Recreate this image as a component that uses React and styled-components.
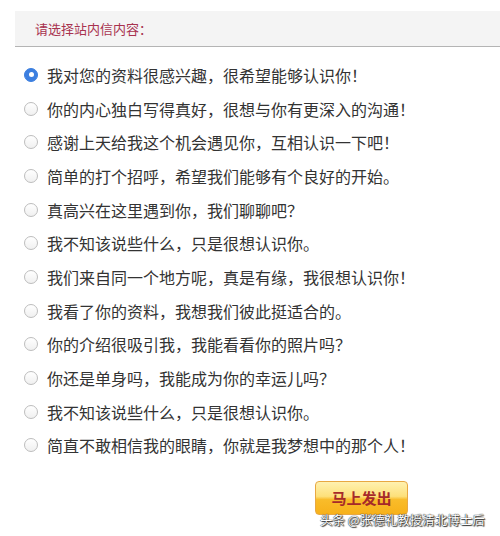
import React, { useState } from "react";
import styled, { createGlobalStyle } from "styled-components";

const GlobalStyle = createGlobalStyle`
  body {
    margin: 0;
    background: #fff;
    font-family: "Noto Sans CJK SC", "Noto Sans", sans-serif;
  }
`;

const Page = styled.div`
  position: relative;
  width: 500px;
  height: 536px;
  padding-top: 11px;
  box-sizing: border-box;
  overflow: hidden;
`;

const Header = styled.div`
  margin-left: 15px;
  height: 35px;
  background: #f4f4f4;
  border-bottom: 1px solid #b4b4b4;
  display: flex;
  align-items: center;
  padding-left: 20px;
  font-size: 13px;
  color: #a8324f;
`;

const List = styled.ul`
  list-style: none;
  margin: 0;
  padding: 11px 0 0 24px;
`;

const Row = styled.li`
  height: 33.7px;
  display: flex;
  align-items: center;
  gap: 9px;
  font-size: 16px;
  color: #333;
  cursor: pointer;
`;

const Radio = styled.span`
  width: 14px;
  height: 14px;
  box-sizing: border-box;
  border-radius: 50%;
  flex-shrink: 0;
  border: 1px solid ${(p) => (p.checked ? "#3c7fe0" : "#bdbdbd")};
  background: ${(p) => (p.checked ? "#3c7fe0" : "linear-gradient(#fff, #f0f0f0)")};
  display: flex;
  align-items: center;
  justify-content: center;
  &::after {
    content: "";
    width: 5px;
    height: 5px;
    border-radius: 50%;
    background: #fff;
    display: ${(p) => (p.checked ? "block" : "none")};
  }
`;

const Footer = styled.div`
  padding: 19px 0 0 315px;
`;

const SendButton = styled.button`
  width: 93px;
  height: 34px;
  border: 1px solid #e8a842;
  border-radius: 4px;
  background: linear-gradient(#fff1b0 0%, #fde07a 45%, #f9bc2a 55%, #f7b11a 100%);
  color: #a62a2a;
  font-family: "Noto Sans CJK SC", sans-serif;
  font-weight: bold;
  font-size: 15px;
  padding: 0 0 2px;
  cursor: pointer;
`;

const Watermark = styled.div`
  position: absolute;
  left: 320px;
  top: 510px;
  font-size: 12.5px;
  color: #fff;
  text-shadow: 0 0 1px #222, 0 0 1px #222, 1px 1px 1px #333;
`;

const messages = [
  "我对您的资料很感兴趣，很希望能够认识你！",
  "你的内心独白写得真好，很想与你有更深入的沟通！",
  "感谢上天给我这个机会遇见你，互相认识一下吧！",
  "简单的打个招呼，希望我们能够有个良好的开始。",
  "真高兴在这里遇到你，我们聊聊吧？",
  "我不知该说些什么，只是很想认识你。",
  "我们来自同一个地方呢，真是有缘，我很想认识你！",
  "我看了你的资料，我想我们彼此挺适合的。",
  "你的介绍很吸引我，我能看看你的照片吗？",
  "你还是单身吗，我能成为你的幸运儿吗？",
  "我不知该说些什么，只是很想认识你。",
  "简直不敢相信我的眼睛，你就是我梦想中的那个人！",
];

export default function App() {
  const [selected, setSelected] = useState(0);
  return (
    <Page>
      <GlobalStyle />
      <Header>请选择站内信内容：</Header>
      <List>
        {messages.map((m, i) => (
          <Row key={i} onClick={() => setSelected(i)}>
            <Radio checked={selected === i} />
            {m}
          </Row>
        ))}
      </List>
      <Footer>
        <SendButton>马上发出</SendButton>
      </Footer>
      <Watermark>头条 @张德礼教授清北博士后</Watermark>
    </Page>
  );
}
